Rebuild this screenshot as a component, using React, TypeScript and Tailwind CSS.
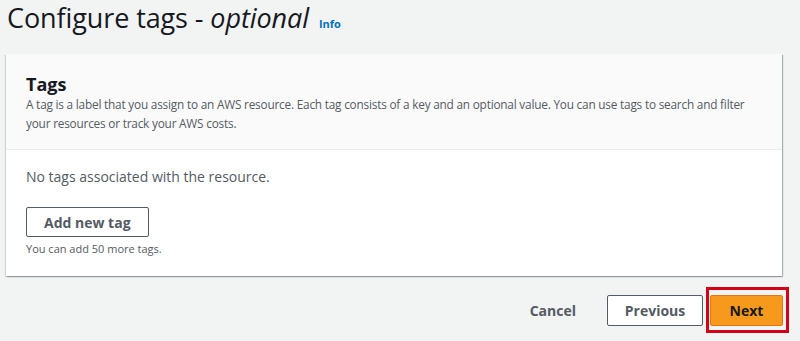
export default function App() {
  return (
    <div className="w-[800px] h-[341px] bg-[#f2f3f3] overflow-hidden font-['Open_Sans',sans-serif] text-[#16191f]">
      <div className="flex items-baseline gap-2.5 pl-[7px] h-[54px]">
        <h1 className="text-[27px] leading-[36px] tracking-[-0.1px]">
          Configure tags - <span className="italic">optional</span>
        </h1>
        <a className="text-[11px] font-bold text-[#0073bb]">Info</a>
      </div>

      <div className="ml-[6px] w-[776px] bg-white shadow-[1px_1px_1px_0_rgba(0,28,36,0.3),-1px_1px_1px_0_rgba(0,28,36,0.15)]">
        <div className="bg-[#fafafa] border-b border-[#eaeded] px-5 pt-[19px] pb-[16px]">
          <h2 className="text-[18px] font-bold leading-[22px]">Tags</h2>
          <p className="text-[11.8px] leading-[19px] tracking-[-0.2px] text-[#545b64] w-[740px]">
            A tag is a label that you assign to an AWS resource. Each tag consists of a key and an optional value. You can use tags to search and filter your resources or track your AWS costs.
          </p>
        </div>
        <div className="px-5 pt-[17px] pb-[19px]">
          <p className="text-[14px] leading-[20px] text-[#545b64]">No tags associated with the resource.</p>
          <button className="mt-[20px] h-[30px] px-[17px] border border-[#545b64] rounded-[2px] bg-white text-[14px] font-bold text-[#545b64]">
            Add new tag
          </button>
          <p className="mt-[4px] text-[11px] leading-[16px] text-[#545b64]">You can add 50 more tags.</p>
        </div>
      </div>

      <div className="flex items-center justify-end gap-[3px] pr-[11px] pt-[11px]">
        <button className="px-5 h-[31px] text-[14px] font-bold text-[#545b64]">Cancel</button>
        <button className="ml-2 w-[96px] h-[31px] border border-[#545b64] rounded-[2px] bg-white text-[14px] font-bold text-[#545b64]">
          Previous
        </button>
        <div className="border-[3px] border-[#d40016] pt-[5px] pb-[4px] pl-[1px] pr-[3px]">
          <button className="block w-[73px] h-[31px] rounded-[2px] border border-[#ec7211] bg-[#f7991c] text-[14px] font-bold text-[#16191f]">
            Next
          </button>
        </div>
      </div>
    </div>
  )
}
